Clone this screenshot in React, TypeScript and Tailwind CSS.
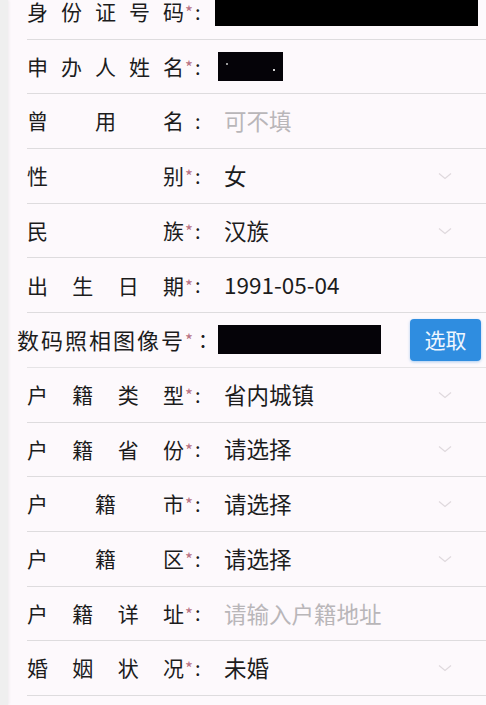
import { ReactNode } from "react";

interface Field {
  label: string[];
  star: boolean;
  value?: ReactNode;
  placeholder?: string;
  select?: boolean;
}

const fields: Field[] = [
  {
    label: ["身", "份", "证", "号", "码"],
    star: true,
    value: <div className="-ml-[9px] h-[29px] w-[263px] bg-black" />,
  },
  {
    label: ["申", "办", "人", "姓", "名"],
    star: true,
    value: (
      <div className="-ml-[6px] flex h-[29px] w-[65px] items-center justify-between bg-[#050308] px-[8px]">
        <span className="mb-[6px] h-[2px] w-[2px] bg-[#9a9a9a]" />
        <span className="mt-[6px] h-[2px] w-[2px] bg-[#d0d0d0]" />
      </div>
    ),
  },
  { label: ["曾", "用", "名"], star: false, placeholder: "可不填" },
  { label: ["性", "别"], star: true, value: "女", select: true },
  { label: ["民", "族"], star: true, value: "汉族", select: true },
  { label: ["出", "生", "日", "期"], star: true, value: "1991-05-04" },
];

const fields2: Field[] = [
  { label: ["户", "籍", "类", "型"], star: true, value: "省内城镇", select: true },
  { label: ["户", "籍", "省", "份"], star: true, value: "请选择", select: true },
  { label: ["户", "籍", "市"], star: true, value: "请选择", select: true },
  { label: ["户", "籍", "区"], star: true, value: "请选择", select: true },
  { label: ["户", "籍", "详", "址"], star: true, placeholder: "请输入户籍地址" },
  { label: ["婚", "姻", "状", "况"], star: true, value: "未婚", select: true },
];

function Chevron() {
  return (
    <svg width="16" height="10" viewBox="0 0 16 10" className="ml-auto mr-[33px] shrink-0">
      <path d="M2 2.5 L8 7.5 L14 2.5" fill="none" stroke="#dfd9dd" strokeWidth="1.2" />
    </svg>
  );
}

function Row({ f }: { f: Field }) {
  return (
    <div className="flex h-[54.7px] shrink-0 items-center border-b border-[#dedcde]">
      <div className="flex w-[157px] justify-between text-[21px]">
        {f.label.map((c, i) => (
          <span key={i}>{c}</span>
        ))}
      </div>
      <span className="flex w-[40px] items-center">
        <span className={`ml-[1px] text-[17px] ${f.star ? "text-[#b87283]" : "invisible"}`}>*</span>
        <span className="ml-[2px]">:</span>
      </span>
      <div className="flex items-center text-[22.5px]">
        {f.value}
        {f.placeholder && <span className="text-[#b9b6b9]">{f.placeholder}</span>}
      </div>
      {f.select && <Chevron />}
    </div>
  );
}

export default function App() {
  return (
    <div
      className="flex h-[705px] w-[486px] overflow-hidden bg-[#fdf9fc] text-[20px] text-[#1c1c1c]"
      style={{ fontFamily: '"Noto Sans CJK SC", "Noto Sans", sans-serif' }}
    >
      <div className="w-[8px] shrink-0 bg-[#efefef] shadow-[1px_0_3px_rgba(0,0,0,0.06)]" />
      <div className="-mt-[15px] ml-[19px] flex flex-1 flex-col">
        {fields.map((f, i) => (
          <Row key={i} f={f} />
        ))}
        <div className="flex h-[54.7px] shrink-0 items-center border-b border-[#e6e4e6]">
          <span className="-ml-[10px] text-[22px] tracking-[2px]">数码照相图像号</span>
          <span className="w-[10px] text-[17px] text-[#b87283]">*</span>
          <span className="ml-[3px] w-[20px]">：</span>
          <div className="h-[29px] w-[163px] bg-[#050308]" />
          <button className="ml-auto mr-[5px] h-[42px] w-[71px] rounded-[4px] bg-[#2f8de0] text-[21px] text-[#eef6ff] shadow-[0_1px_3px_rgba(47,141,224,0.4)]">
            选取
          </button>
        </div>
        {fields2.map((f, i) => (
          <Row key={i} f={f} />
        ))}
      </div>
    </div>
  );
}
